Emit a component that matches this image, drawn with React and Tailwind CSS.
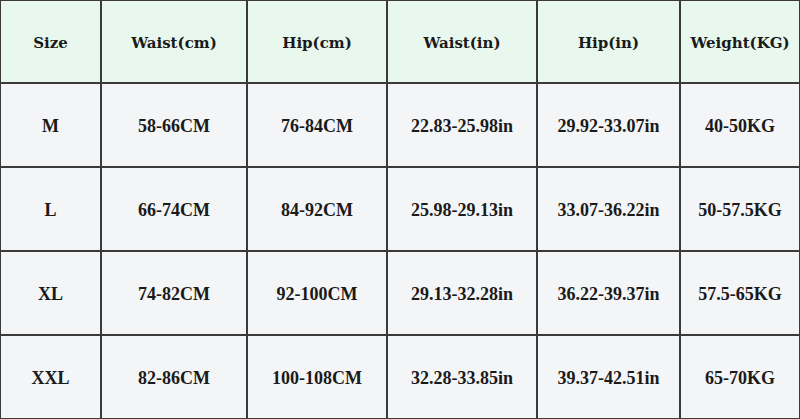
const headers = ["Size", "Waist(cm)", "Hip(cm)", "Waist(in)", "Hip(in)", "Weight(KG)"];

const rows = [
  ["M", "58-66CM", "76-84CM", "22.83-25.98in", "29.92-33.07in", "40-50KG"],
  ["L", "66-74CM", "84-92CM", "25.98-29.13in", "33.07-36.22in", "50-57.5KG"],
  ["XL", "74-82CM", "92-100CM", "29.13-32.28in", "36.22-39.37in", "57.5-65KG"],
  ["XXL", "82-86CM", "100-108CM", "32.28-33.85in", "39.37-42.51in", "65-70KG"],
];

export default function App() {
  return (
    <div className="w-[800px] h-[419px] bg-[#3a3a3a] pl-px pt-px pr-px pb-px grid grid-cols-[99px_144px_138px_148px_141px_1fr] grid-rows-[81px_82px_82px_82px_1fr] gap-[2px] overflow-hidden">
      {headers.map((h) => (
        <div
          key={h}
          className="bg-[#e9f8ee] flex items-center justify-center pt-[3px] text-[#1a1a1a] font-bold text-[15px] font-['DejaVu_Serif',serif]"
        >
          {h}
        </div>
      ))}
      {rows.map((r) =>
        r.map((c, i) => (
          <div
            key={r[0] + i}
            className="bg-[#f4f5f7] flex items-center justify-center pt-[3px] text-[#1a1a1a] font-bold text-[18px] font-['Liberation_Serif',serif]"
          >
            {c}
          </div>
        ))
      )}
    </div>
  );
}
